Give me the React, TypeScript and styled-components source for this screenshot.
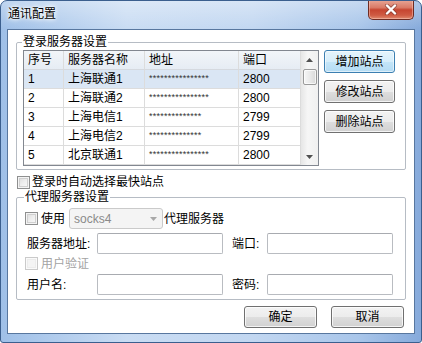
import React from "react";
import styled, { createGlobalStyle } from "styled-components";

const GlobalStyle = createGlobalStyle`
  html, body { margin: 0; padding: 0; background: #ffffff; }
  body {
    font-family: "Liberation Sans", "Noto Sans CJK SC", sans-serif;
    font-size: 12px;
    color: #000;
  }
  * { box-sizing: border-box; }
`;

const Window = styled.div`
  width: 422px;
  height: 343px;
  border: 1px solid #3b5f8e;
  border-radius: 7px 7px 3px 3px;
  background:
    linear-gradient(180deg, rgba(255,255,255,0.35) 0px, rgba(255,255,255,0) 28px),
    linear-gradient(90deg, #9fc0e8 0%, #c9dcf3 30%, #c2d7f1 60%, #a9c6ea 85%, #86aadb 100%);
  display: flex;
  flex-direction: column;
  overflow: hidden;
`;

const TitleBar = styled.div`
  height: 28px;
  display: flex;
  align-items: flex-start;
  padding-left: 7px;
`;

const TitleText = styled.span`
  margin-top: 5px;
  line-height: 16px;
  font-size: 12px;
  color: #000;
  text-shadow: 0 0 6px #fff, 0 0 4px #fff, 0 0 2px #fff;
`;

const CloseButton = styled.div`
  margin-left: auto;
  margin-right: 7px;
  margin-top: -1px;
  width: 46px;
  height: 20px;
  border: 1px solid #6e2b22;
  border-top: none;
  border-radius: 0 0 5px 5px;
  background: linear-gradient(180deg, #e8a797 0%, #d97a66 40%, #c64530 52%, #cf5a43 80%, #e08a6e 100%);
  box-shadow: inset 0 0 0 1px rgba(255, 210, 200, 0.45);
  display: flex;
  align-items: center;
  justify-content: center;
`;

const Client = styled.div`
  flex: 1;
  margin: 0 6px 8px;
  border: 1px solid #58779f;
  background: #ffffff;
  padding: 5px 8px 0;
  display: flex;
  flex-direction: column;
`;

const GroupBox = styled.fieldset<{ $pad: string }>`
  margin: 0;
  padding: ${(p) => p.$pad};
  border: 1px solid #b6bcc4;
  border-radius: 2px;
  min-width: 0;
`;

const Legend = styled.legend`
  padding: 0 1px;
  margin-left: -1px;
  line-height: 14px;
  height: 14px;
  font-size: 12px;
`;

const ServerArea = styled.div`
  display: flex;
  gap: 5px;
  align-items: flex-start;
`;

const ListView = styled.div`
  width: 296px;
  border: 1px solid #828790;
  display: flex;
`;

const Grid = styled.div`
  flex: 1;
  display: grid;
  grid-template-columns: 40px 81px 94px 62px;
`;

const Cell = styled.div<{ $head?: boolean; $sel?: boolean }>`
  height: 19px;
  padding: 0 0 0 4px;
  display: flex;
  align-items: center;
  border-right: 1px solid #dcdcdc;
  border-bottom: 1px solid #dcdcdc;
  white-space: nowrap;
  overflow: hidden;
  line-height: 14px;
  background: ${(p) => (p.$head ? "linear-gradient(180deg, #f2f5f9, #e6ecf4)" : p.$sel ? "#dae6f4" : "#ffffff")};
  border-bottom-color: ${(p) => (p.$head ? "#d5d9df" : "#dcdcdc")};
`;

const Mask = styled.span`
  font-size: 9px;
  letter-spacing: 0.25px;
  color: #333;
  margin-top: -2px;
`;

const ScrollBar = styled.div`
  width: 17px;
  background: linear-gradient(90deg, #e6e6e6, #f6f6f6 40%, #f0f0f0);
  display: flex;
  flex-direction: column;
`;

const ScrollArrow = styled.div`
  height: 17px;
  display: flex;
  align-items: center;
  justify-content: center;
`;

const Thumb = styled.div`
  height: 16px;
  margin: 1px 1px 0 2px;
  border: 1px solid #9a9a9a;
  border-radius: 2px;
  background: linear-gradient(90deg, #f6f6f6, #e9e9e9 50%, #d9d9d9);
  box-shadow: inset 0 0 0 1px rgba(255,255,255,0.7);
`;

const Track = styled.div`
  flex: 1;
`;

const SideButtons = styled.div`
  display: flex;
  flex-direction: column;
  gap: 7px;
`;

const Button = styled.button<{ $w: number; $h: number; $active?: boolean }>`
  width: ${(p) => p.$w}px;
  height: ${(p) => p.$h}px;
  padding: 0;
  margin: 0;
  font: inherit;
  font-size: 12px;
  color: #000;
  line-height: 14px;
  border: 1px solid ${(p) => (p.$active ? "#3c7fb1" : "#707070")};
  border-radius: 3px;
  background: ${(p) =>
    p.$active
      ? "linear-gradient(180deg, #e5f4fc 0%, #d6eefb 50%, #c4e5f8 51%, #b4dcf4 100%)"
      : "linear-gradient(180deg, #f3f3f3 0%, #ececec 50%, #dedede 51%, #d1d1d1 100%)"};
  box-shadow: inset 0 0 0 1px ${(p) => (p.$active ? "rgba(255,255,255,0.55)" : "rgba(255,255,255,0.75)")};
`;

const CheckRow = styled.div<{ $mt: number; $ml: number; $h: number }>`
  display: flex;
  align-items: center;
  height: ${(p) => p.$h}px;
  margin-top: ${(p) => p.$mt}px;
  margin-left: ${(p) => p.$ml}px;
`;

const CheckBox = styled.span<{ $disabled?: boolean }>`
  width: 13px;
  height: 13px;
  border: 1px solid ${(p) => (p.$disabled ? "#cacaca" : "#8e8f8f")};
  background: ${(p) =>
    p.$disabled ? "#f4f4f4" : "linear-gradient(135deg, #d8d8d8 0%, #eeeeee 50%, #fbfbfb 100%)"};
  box-shadow: inset 0 0 0 1px ${(p) => (p.$disabled ? "#fafafa" : "#f4f4f4")},
    inset 0 0 0 2px ${(p) => (p.$disabled ? "#ececec" : "#d0d0d0")};
  margin-right: 2px;
  flex: none;
`;

const Label = styled.span<{ $disabled?: boolean; $w?: number; $ml?: number }>`
  color: ${(p) => (p.$disabled ? "#a3a3a3" : "#000")};
  width: ${(p) => (p.$w ? `${p.$w}px` : "auto")};
  margin-left: ${(p) => p.$ml ?? 0}px;
  flex: none;
  line-height: 14px;
  white-space: nowrap;
`;

const ProxyRow = styled.div<{ $mt: number; $h: number }>`
  display: flex;
  align-items: center;
  height: ${(p) => p.$h}px;
  margin-top: ${(p) => p.$mt}px;
`;

const Select = styled.div`
  width: 94px;
  height: 21px;
  margin-left: 4px;
  margin-right: 1px;
  border: 1px solid #cacaca;
  border-radius: 3px;
  background: #f4f4f4;
  color: #8a8a8a;
  display: flex;
  align-items: center;
  justify-content: space-between;
  padding: 0 5px 0 4px;
  flex: none;
`;

const TextBox = styled.div`
  width: 126px;
  height: 21px;
  border: 1px solid #b9bcc1;
  border-top-color: #a8abb0;
  border-radius: 2px;
  background: #fff;
  flex: none;
`;

const Footer = styled.div`
  display: flex;
  justify-content: flex-end;
  gap: 14px;
  margin-top: 6px;
  padding-right: 2px;
`;

type Row = { id: string; name: string; mask: number; port: string };

const rows: Row[] = [
  { id: "1", name: "上海联通1", mask: 16, port: "2800" },
  { id: "2", name: "上海联通2", mask: 16, port: "2800" },
  { id: "3", name: "上海电信1", mask: 14, port: "2799" },
  { id: "4", name: "上海电信2", mask: 14, port: "2799" },
  { id: "5", name: "北京联通1", mask: 16, port: "2800" },
];

const Arrow = ({ up }: { up?: boolean }) => (
  <svg width="7" height="4" viewBox="0 0 7 4">
    <path d={up ? "M0 4 L3.5 0 L7 4 Z" : "M0 0 L3.5 4 L7 0 Z"} fill="#505050" />
  </svg>
);

export default function App() {
  return (
    <>
      <GlobalStyle />
      <Window>
        <TitleBar>
          <TitleText>通讯配置</TitleText>
          <CloseButton>
            <svg width="14" height="11" viewBox="0 0 14 11">
              <path d="M3 1.5 L11 9.5 M11 1.5 L3 9.5" stroke="#7a3a30" strokeWidth="4" strokeLinecap="round" opacity="0.6" />
              <path d="M3 1.5 L11 9.5 M11 1.5 L3 9.5" stroke="#ffffff" strokeWidth="2.4" strokeLinecap="round" />
            </svg>
          </CloseButton>
        </TitleBar>
        <Client>
          <GroupBox $pad="1px 10px 3px 6px">
            <Legend>登录服务器设置</Legend>
            <ServerArea>
              <ListView>
                <Grid>
                  <Cell $head>序号</Cell>
                  <Cell $head>服务器名称</Cell>
                  <Cell $head>地址</Cell>
                  <Cell $head>端口</Cell>
                  {rows.map((r, i) => (
                    <React.Fragment key={r.id}>
                      <Cell $sel={i === 0}>{r.id}</Cell>
                      <Cell $sel={i === 0}>{r.name}</Cell>
                      <Cell $sel={i === 0}>
                        <Mask>{"*".repeat(r.mask)}</Mask>
                      </Cell>
                      <Cell $sel={i === 0}>{r.port}</Cell>
                    </React.Fragment>
                  ))}
                </Grid>
                <ScrollBar>
                  <ScrollArrow>
                    <Arrow up />
                  </ScrollArrow>
                  <Thumb />
                  <Track />
                  <ScrollArrow>
                    <Arrow />
                  </ScrollArrow>
                </ScrollBar>
              </ListView>
              <SideButtons>
                <Button $w={71} $h={23} $active>增加站点</Button>
                <Button $w={71} $h={23}>修改站点</Button>
                <Button $w={71} $h={23}>删除站点</Button>
              </SideButtons>
            </ServerArea>
          </GroupBox>

          <CheckRow $mt={4} $ml={1} $h={16}>
            <CheckBox />
            <Label>登录时自动选择最快站点</Label>
          </CheckRow>

          <GroupBox $pad="0 10px 4px 8px">
            <Legend>代理服务器设置</Legend>
            <ProxyRow $mt={4} $h={21}>
              <CheckBox style={{ marginRight: 3 }} />
              <Label>使用</Label>
              <Select>
                <span>socks4</span>
                <svg width="7" height="4" viewBox="0 0 7 4">
                  <path d="M0 0 L3.5 4 L7 0 Z" fill="#a8a8a8" />
                </svg>
              </Select>
              <Label>代理服务器</Label>
            </ProxyRow>
            <ProxyRow $mt={4} $h={21}>
              <Label $w={70} $ml={2}>服务器地址:</Label>
              <TextBox />
              <Label $w={35} $ml={9}>端口:</Label>
              <TextBox />
            </ProxyRow>
            <ProxyRow $mt={2} $h={15}>
              <CheckBox $disabled style={{ marginRight: 3 }} />
              <Label $disabled>用户验证</Label>
            </ProxyRow>
            <ProxyRow $mt={3} $h={21}>
              <Label $w={70} $ml={2}>用户名:</Label>
              <TextBox />
              <Label $w={35} $ml={9}>密码:</Label>
              <TextBox />
            </ProxyRow>
          </GroupBox>

          <Footer>
            <Button $w={73} $h={22}>确定</Button>
            <Button $w={73} $h={22}>取消</Button>
          </Footer>
        </Client>
      </Window>
    </>
  );
}
